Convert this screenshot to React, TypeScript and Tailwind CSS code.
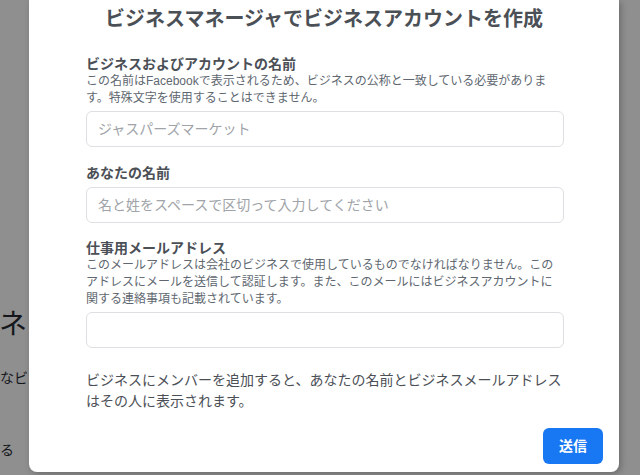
import React from 'react';

const FONT = { fontFamily: '"Liberation Sans", "Noto Sans CJK JP", sans-serif' };

const Field = ({ label, help, placeholder }: { label: string; help?: string; placeholder?: string }) => (
    <div className="flex flex-col">
        <div className="text-[14px] leading-[18px] font-bold text-[#4b4f56]">{label}</div>
        {help && <div className="text-[12px] leading-[17px] text-[#606770]">{help}</div>}
        <input
            className="mt-[4px] h-[36px] w-full rounded-[6px] border border-[#dddfe2] bg-white px-[11px] text-[14px] text-[#1c1e21] outline-none placeholder:text-[#a0a3a8]"
            placeholder={placeholder}
            style={FONT}
        />
    </div>
);

const App = () => {
    return (
        <div className="relative h-[475px] w-[640px] overflow-hidden bg-[#8f8f8f]" style={FONT}>
            {/* page behind the overlay */}
            <div className="flex flex-col pt-[306px] text-[#15171c]">
                <div className="-ml-[1px] text-[28px] leading-[38px] whitespace-nowrap">ネス</div>
                <div className="mt-[24px] text-[14px] leading-[20px] whitespace-nowrap">なビ</div>
                <div className="mt-[52px] text-[14px] leading-[20px] whitespace-nowrap">る</div>
            </div>

            {/* dialog */}
            <div className="absolute left-[29px] top-0 flex h-[472px] w-[590px] flex-col rounded-b-[8px] bg-white shadow-[2px_2px_6px_rgba(0,0,0,0.25)]">
                <h1 className="pt-[5px] text-center text-[20px] leading-[28px] font-bold text-[#4b4f56]">
                    ビジネスマネージャでビジネスアカウントを作成
                </h1>
                <div className="flex flex-col pl-[57px] pr-[55px] pt-[22px]">
                    <Field
                        label="ビジネスおよびアカウントの名前"
                        help="この名前はFacebookで表示されるため、ビジネスの公称と一致している必要があります。特殊文字を使用することはできません。"
                        placeholder="ジャスパーズマーケット"
                    />
                    <div className="mt-[17px]">
                        <div className="text-[14px] leading-[18px] font-bold text-[#4b4f56]">あなたの名前</div>
                        <input
                            className="mt-[5px] h-[36px] w-full rounded-[6px] border border-[#dddfe2] bg-white px-[11px] text-[14px] outline-none placeholder:text-[#a0a3a8]"
                            placeholder="名と姓をスペースで区切って入力してください"
                            style={FONT}
                        />
                    </div>
                    <div className="mt-[16px]">
                        <Field
                            label="仕事用メールアドレス"
                            help="このメールアドレスは会社のビジネスで使用しているものでなければなりません。このアドレスにメールを送信して認証します。また、このメールにはビジネスアカウントに関する連絡事項も記載されています。"
                        />
                    </div>
                    <p className="mt-[22px] text-[14px] leading-[21px] text-[#4b4f56]">
                        ビジネスにメンバーを追加すると、あなたの名前とビジネスメールアドレスはその人に表示されます。
                    </p>
                </div>
                <div className="mt-auto flex justify-end pb-[8px] pr-[16px]">
                    <button className="h-[36px] w-[60px] rounded-[6px] bg-[#1877f2] text-[14px] font-bold text-white">
                        送信
                    </button>
                </div>
            </div>
        </div>
    );
};

export default App;
